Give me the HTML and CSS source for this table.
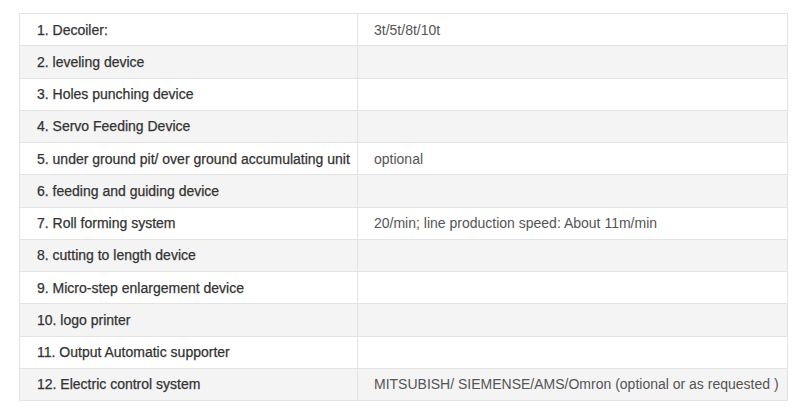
FILE: index.html
```html
<!DOCTYPE html>
<html>
<head>
<meta charset="utf-8">
<link rel="stylesheet" href="styles.css">
</head>
<body>
<table class="spec">
  <colgroup><col class="c1"><col class="c2"></colgroup>
  <tbody>
    <tr><td class="name">1. Decoiler:</td><td class="val">3t/5t/8t/10t</td></tr>
    <tr><td class="name">2. leveling device</td><td class="val"></td></tr>
    <tr><td class="name">3. Holes punching device</td><td class="val"></td></tr>
    <tr><td class="name">4. Servo Feeding Device</td><td class="val"></td></tr>
    <tr><td class="name">5. under ground pit/ over ground accumulating unit</td><td class="val">optional</td></tr>
    <tr><td class="name">6. feeding and guiding device</td><td class="val"></td></tr>
    <tr><td class="name">7. Roll forming system</td><td class="val">20/min; line production speed: About 11m/min</td></tr>
    <tr><td class="name">8. cutting to length device</td><td class="val"></td></tr>
    <tr><td class="name">9. Micro-step enlargement device</td><td class="val"></td></tr>
    <tr><td class="name">10. logo printer</td><td class="val"></td></tr>
    <tr><td class="name">11. Output Automatic supporter</td><td class="val"></td></tr>
    <tr><td class="name">12. Electric control system</td><td class="val">MITSUBISH/ SIEMENSE/AMS/Omron (optional or as requested )</td></tr>
  </tbody>
</table>
</body>
</html>
```

FILE: styles.css
```css
html, body {
  margin: 0;
  padding: 0;
  background: #ffffff;
}
body {
  padding: 13px 0 0 19px;
  font-family: "Liberation Sans", Arial, sans-serif;
  font-size: 14px;
}
.spec {
  border-collapse: collapse;
  width: 769px;
  table-layout: fixed;
}
.spec .c1 {
  width: 338px;
}
.spec tr {
  height: 32.25px;
}
.spec td {
  border: 1px solid #e3e3e3;
  padding: 0 0 0 17px;
  vertical-align: middle;
  line-height: 16px;
  white-space: nowrap;
}
.spec tr:nth-child(even) td {
  background: #f4f4f4;
}
.spec .name {
  color: #333333;
  padding-left: 17px;
  -webkit-text-stroke: 0.25px #333333;
}
.spec .val {
  color: #555555;
  padding-left: 16px;
}
```
